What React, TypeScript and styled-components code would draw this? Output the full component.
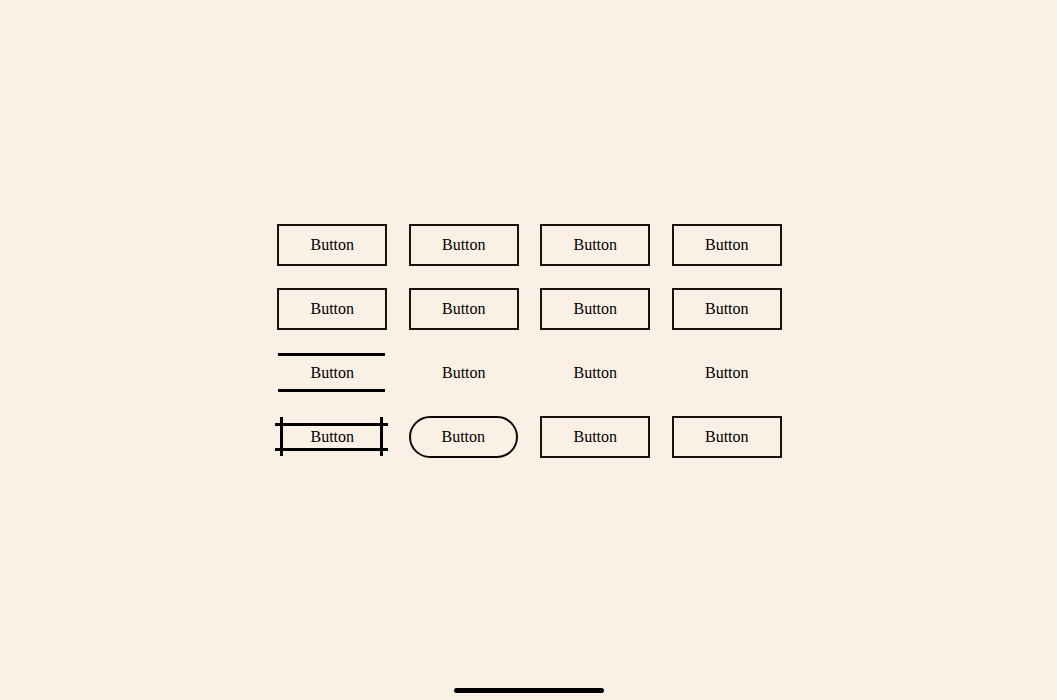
import React from "react";
import styled, { createGlobalStyle, css } from "styled-components";

const Global = createGlobalStyle`
  html, body { margin: 0; padding: 0; background: #faf0e6; }
  body { font-family: "Liberation Serif", "Times New Roman", serif; }
`;

const Page = styled.div`
  height: 700px;
  display: flex;
  flex-direction: column;
  align-items: center;
  background: #faf0e6;
`;

const Stage = styled.main`
  box-sizing: border-box;
  height: 682px;
  width: 100%;
  padding-left: 2px;
  display: flex;
  align-items: center;
  justify-content: center;
`;

const Grid = styled.div`
  display: grid;
  grid-template-columns: repeat(4, 110px);
  grid-auto-rows: 42px;
  column-gap: 21.5px;
  row-gap: 22px;
`;

type Variant = "box" | "lines" | "plain" | "frame" | "pill";

const Btn = styled.button<{ $variant: Variant }>`
  position: relative;
  box-sizing: border-box;
  width: 110px;
  height: 42px;
  padding: 0;
  background: transparent;
  font-family: "Liberation Serif", "Times New Roman", serif;
  font-size: 16px;
  color: #000;
  border: none;
  cursor: pointer;
  display: flex;
  align-items: center;
  justify-content: center;

  ${(p) =>
    p.$variant === "box" &&
    css`
      border: 2px solid #161210;
    `}

  ${(p) =>
    p.$variant === "pill" &&
    css`
      border: 2px solid #0d0b0a;
      border-radius: 21px;
      width: 109px;
    `}

  ${(p) =>
    p.$variant === "lines" &&
    css`
      &::before {
        content: "";
        position: absolute;
        left: 1px;
        right: 2px;
        top: 1px;
        bottom: 2px;
        border-top: 3px solid #000;
        border-bottom: 3px solid #000;
      }
    `}

  ${(p) =>
    p.$variant === "frame" &&
    css`
      &::before {
        content: "";
        position: absolute;
        left: -2px;
        right: -1px;
        top: 7px;
        bottom: 7px;
        border-top: 3px solid #000;
        border-bottom: 3px solid #000;
      }
      &::after {
        content: "";
        position: absolute;
        left: 3px;
        right: 4px;
        top: 1px;
        bottom: 2px;
        border-left: 3px solid #000;
        border-right: 3px solid #000;
      }
    `}
`;

const HomeBar = styled.div`
  width: 150px;
  height: 5px;
  margin-top: 6px;
  border-radius: 3px;
  background: #000;
`;

const variants: Variant[] = [
  "box", "box", "box", "box",
  "box", "box", "box", "box",
  "lines", "plain", "plain", "plain",
  "frame", "pill", "box", "box",
];

export default function App() {
  return (
    <Page>
      <Global />
      <Stage>
        <Grid>
          {variants.map((v, i) => (
            <Btn key={i} $variant={v}>
              Button
            </Btn>
          ))}
        </Grid>
      </Stage>
      <HomeBar />
    </Page>
  );
}
